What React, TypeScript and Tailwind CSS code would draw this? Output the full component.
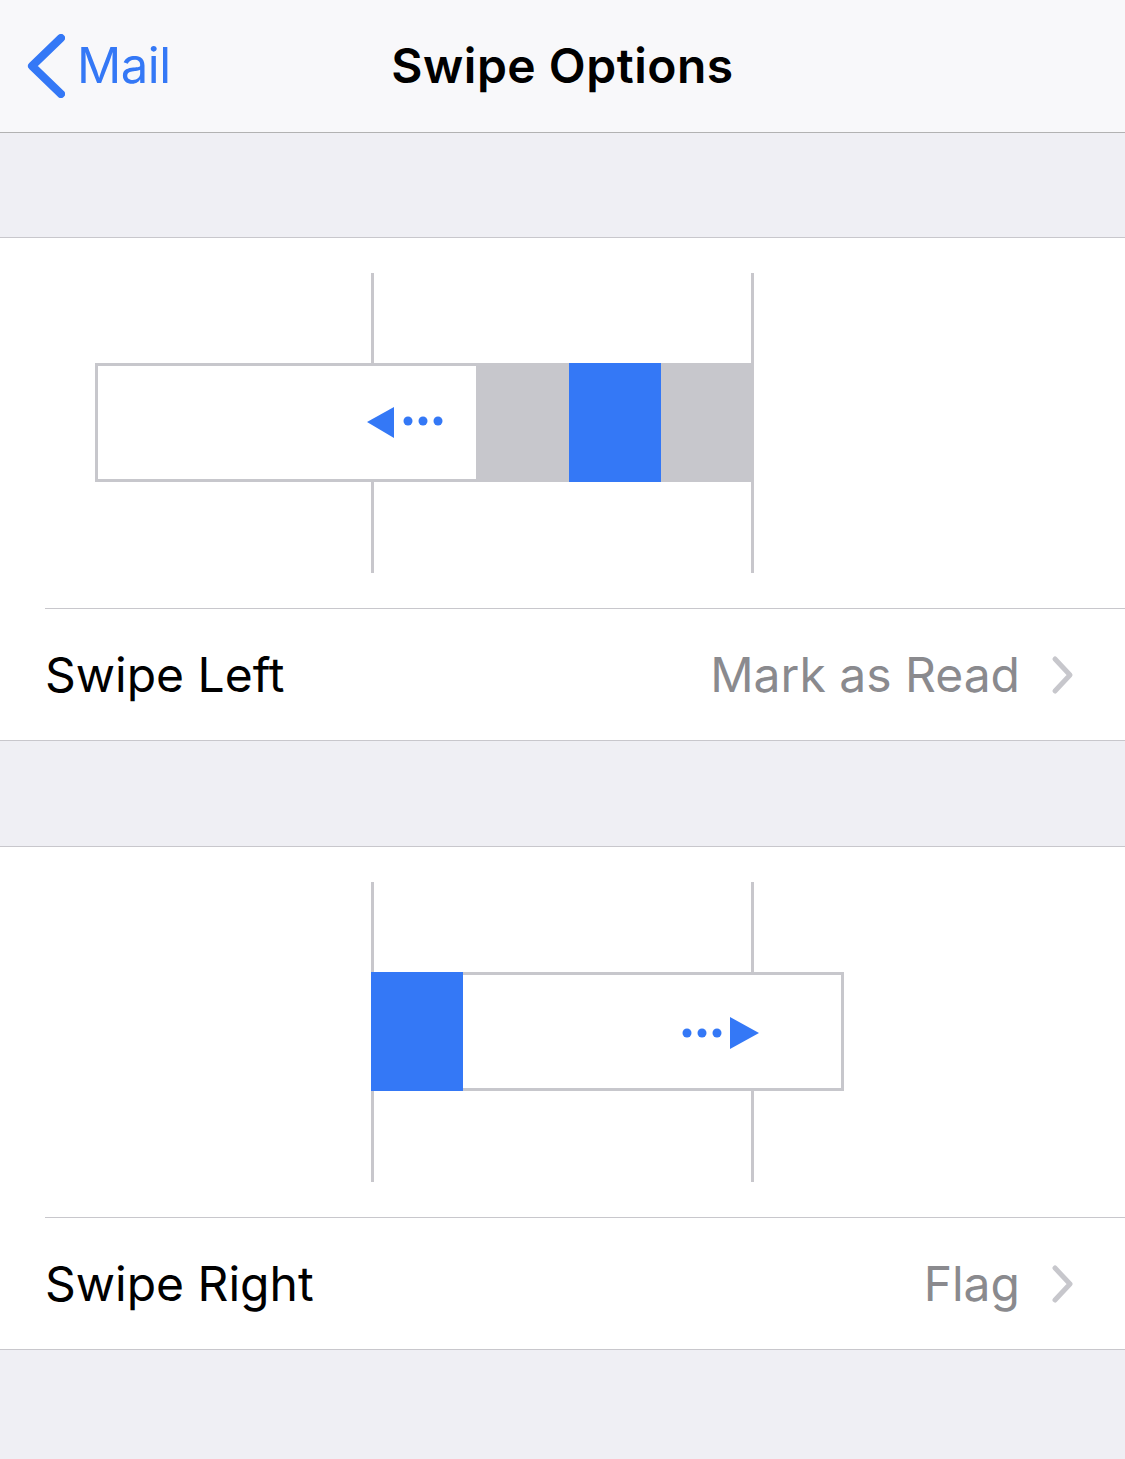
import React from "react";

const font = { fontFamily: "Inter, 'Liberation Sans', sans-serif" };

function LeftDiagram() {
  return (
    <svg width="1125" height="370" viewBox="0 0 1125 370" className="block">
      <rect x="371" y="35" width="3" height="300" fill="#c8c7cc" />
      <rect x="751" y="35" width="3" height="300" fill="#c8c7cc" />
      <rect x="95" y="125" width="658" height="119" fill="#c7c7cc" />
      <rect x="98" y="128" width="378" height="113" fill="#ffffff" />
      <rect x="569" y="125" width="92" height="119" fill="#3478f6" />
      <polygon points="367,184 394,169 394,200" fill="#3478f6" />
      <circle cx="408" cy="183" r="4.5" fill="#3478f6" />
      <circle cx="423" cy="183" r="4.5" fill="#3478f6" />
      <circle cx="438" cy="183" r="4.5" fill="#3478f6" />
    </svg>
  );
}

function RightDiagram() {
  return (
    <svg width="1125" height="370" viewBox="0 0 1125 370" className="block">
      <rect x="371" y="35" width="3" height="300" fill="#c8c7cc" />
      <rect x="751" y="35" width="3" height="300" fill="#c8c7cc" />
      <rect x="371" y="125" width="473" height="119" fill="#c7c7cc" />
      <rect x="463" y="128" width="378" height="113" fill="#ffffff" />
      <rect x="371" y="125" width="92" height="119" fill="#3478f6" />
      <circle cx="687" cy="186" r="4.5" fill="#3478f6" />
      <circle cx="702" cy="186" r="4.5" fill="#3478f6" />
      <circle cx="717" cy="186" r="4.5" fill="#3478f6" />
      <polygon points="759,186 730,170 730,202" fill="#3478f6" />
    </svg>
  );
}

function Chevron() {
  return (
    <svg width="24" height="40" viewBox="0 0 24 40" className="block">
      <path d="M4 4 L19 20 L4 36" fill="none" stroke="#c7c7cc" strokeWidth="5" strokeLinecap="round" strokeLinejoin="round" />
    </svg>
  );
}

function OptionRow({ label, value }: { label: string; value: string }) {
  return (
    <div className="flex items-center h-[131px] pl-[45px] pr-[50px]">
      <span className="text-[48px] text-black">{label}</span>
      <div className="ml-auto flex items-center gap-[31px]">
        <span className="text-[48px] text-[#8a8a8e]">{value}</span>
        <Chevron />
      </div>
    </div>
  );
}

function Section({ diagram, label, value }: { diagram: React.ReactNode; label: string; value: string }) {
  return (
    <div className="bg-white border-y border-[#c8c7cc]">
      {diagram}
      <div className="ml-[45px] h-px bg-[#c8c7cc]" />
      <OptionRow label={label} value={value} />
    </div>
  );
}

export default function App() {
  return (
    <div className="w-[1125px] h-[1459px] bg-[#efeff4] overflow-hidden" style={font}>
      <div className="relative h-[133px] bg-[#f8f8fa] border-b border-[#b2b2b2] flex items-center">
        <div className="flex items-center pl-[27px] gap-[12px] text-[#3478f6]">
          <svg width="38" height="64" viewBox="0 0 38 64" className="block">
            <path d="M34 4 L5 32 L34 60" fill="none" stroke="#3478f6" strokeWidth="8" strokeLinecap="round" strokeLinejoin="round" />
          </svg>
          <span className="text-[49px] tracking-[-0.5px]">Mail</span>
        </div>
        <h1 className="absolute left-0 right-0 text-center pointer-events-none text-[48px] font-semibold text-black tracking-[0.5px]">
          Swipe Options
        </h1>
      </div>
      <div className="h-[104px]" />
      <Section diagram={<LeftDiagram />} label="Swipe Left" value="Mark as Read" />
      <div className="h-[105px]" />
      <Section diagram={<RightDiagram />} label="Swipe Right" value="Flag" />
    </div>
  );
}
